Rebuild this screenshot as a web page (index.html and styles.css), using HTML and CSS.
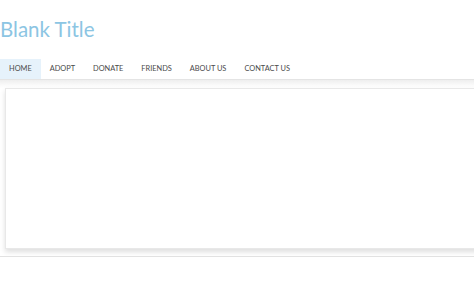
FILE: index.html
```html
<!DOCTYPE html>
<html lang="en">
<head>
    <meta charset="UTF-8">
    <meta name="viewport" content="width=device-width, initial-scale=1.0">
    <title>Blank Title</title>
    <link rel="stylesheet" href="styles.css">
</head>
<body>

<div class="header">
    <h1 class="site-title">Blank Title</h1>
</div>

<ul class="nav">
    <li class="active">Home</li>
    <li>Adopt</li>
    <li>Donate</li>
    <li>Friends</li>
    <li>About Us</li>
    <li>Contact Us</li>
</ul>

<div class="main">
    <div class="content-box"></div>
</div>

<div class="footer"></div>

</body>
</html>
```

FILE: styles.css
```css
body {
    font-family: Lato, "Liberation Sans", sans-serif;
    margin: 0;
    padding: 0;
    background-color: #fff;
    overflow: hidden;
}
.header {
    height: 59px;
}
.site-title {
    margin: 0;
    padding-top: 15px;
    font-size: 20.5px;
    font-weight: normal;
    color: #8cc5e3;
    line-height: 28px;
}
.nav {
    list-style: none;
    margin: 0;
    padding: 0;
    display: flex;
    height: 20px;
    border-bottom: 1px solid #e4e4e4;
}
.nav li {
    padding: 0 9px;
    font-size: 7.4px;
    line-height: 20px;
    color: #4a4a4a;
    text-transform: uppercase;
}
.nav li.active {
    background-color: #e6f2fb;
}
.main {
    padding: 8px 0 0 5px;
    background: linear-gradient(#eeeeee, #fafafa 5px, #fff 8px);
}
.content-box {
    height: 159px;
    margin-right: -10px;
    background-color: #fff;
    border: 1px solid #e8e8e8;
    border-right: none;
    box-shadow: 0 3px 5px rgba(0, 0, 0, 0.13);
}
.footer {
    margin-top: 7px;
    border-top: 1px solid #e2e2e2;
}
```
